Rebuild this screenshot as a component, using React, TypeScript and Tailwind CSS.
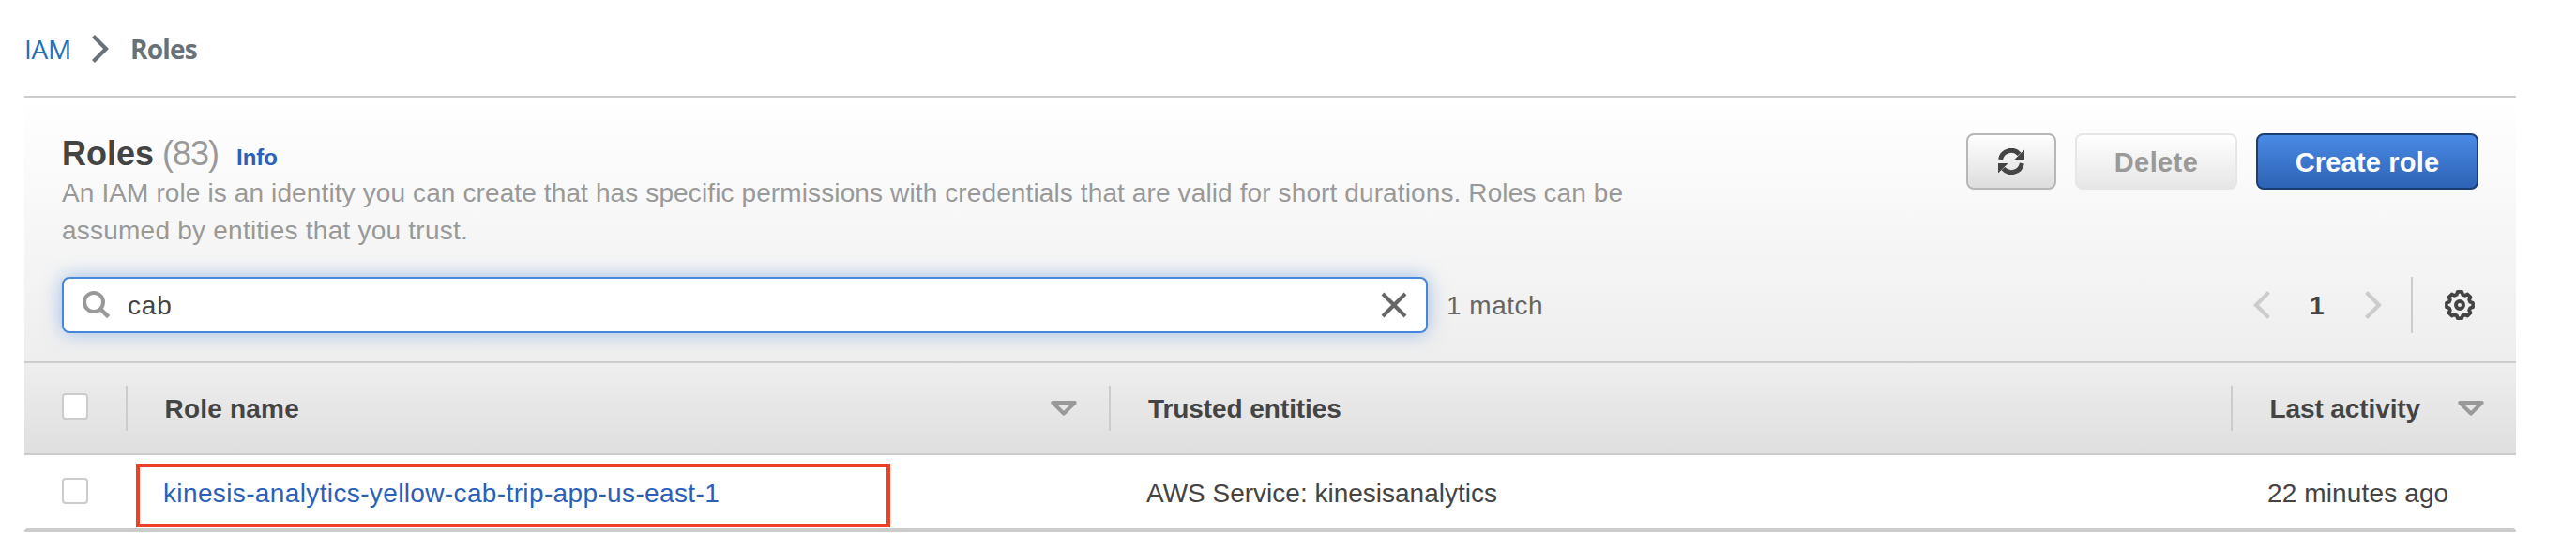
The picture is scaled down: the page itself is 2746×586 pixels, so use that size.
import React from 'react';

function gearOutline(): string {
  const points: string[] = [];
  for (let k = 0; k < 8; k++) {
    const base = k * 45;
    const steps: [number, number][] = [
      [-9, 14.2],
      [9, 14.2],
      [16, 11.6],
      [29, 11.6],
    ];
    for (const [offset, radius] of steps) {
      const angle = ((base + offset) * Math.PI) / 180;
      points.push(`${(16 + radius * Math.cos(angle)).toFixed(2)} ${(16 + radius * Math.sin(angle)).toFixed(2)}`);
    }
  }
  return `M${points.join('L')}Z`;
}

const GEAR = gearOutline();

function GearIcon() {
  return (
    <svg width="32" height="32" viewBox="0 0 32 32" fill="none" stroke="#444444">
      <path d={GEAR} strokeWidth="3.8" strokeLinejoin="round" />
      <circle cx="16" cy="16" r="4" strokeWidth="4" />
    </svg>
  );
}

function RefreshIcon() {
  return (
    <svg width="28" height="28" viewBox="0 0 28 28">
      <g fill="none" stroke="#444444" strokeWidth="5">
        <path d="M2.6 12A11.5 11.5 0 0 1 22.6 6.3" />
        <path d="M25.4 16A11.5 11.5 0 0 1 5.4 21.7" />
      </g>
      <path d="M28 1.4V12H17.4ZM0 26.6V16H10.6Z" fill="#444444" />
    </svg>
  );
}

function SearchIcon() {
  return (
    <svg width="30" height="30" viewBox="0 0 30 30" fill="none" stroke="#999999">
      <circle cx="12" cy="12" r="10" strokeWidth="4" />
      <path d="M19 19L27.6 27.6" strokeWidth="4.4" />
    </svg>
  );
}

function CloseIcon() {
  return (
    <svg width="28" height="28" viewBox="0 0 28 28" fill="none" stroke="#666666" strokeWidth="4">
      <path d="M2 2L26 26M26 2L2 26" />
    </svg>
  );
}

function Chevron({ color, flip = false }: { color: string; flip?: boolean }) {
  return (
    <svg width="18" height="30" viewBox="0 0 18 30" fill="none" stroke={color} strokeWidth="4.2">
      <path d={flip ? 'M16.5 1.5L3 15L16.5 28.5' : 'M1.5 1.5L15 15L1.5 28.5'} />
    </svg>
  );
}

function SortIcon() {
  return (
    <svg width="28" height="16" viewBox="0 0 28 16" fill="none" stroke="#999999" strokeWidth="4" strokeLinejoin="round">
      <path d="M2.3 2H25.7L14 13.6Z" />
    </svg>
  );
}

function Checkbox() {
  return <span className="block h-7 w-7 shrink-0 rounded border-2 border-[#cccccc] bg-white" />;
}

function ColumnDivider() {
  return <span className="block h-12 w-0.5 shrink-0 bg-[#cccccc]" />;
}

export default function App() {
  return (
    <div className="h-[586px] w-[2746px] overflow-hidden bg-white pl-[26px] pr-16 pt-[31px] font-['Liberation_Sans',Arial,sans-serif] text-[28px] leading-10 text-[#444444]">
      <nav className="mb-[31px] flex h-10 items-center font-['Open_Sans',sans-serif]">
        <a className="w-[72px] pt-0.5 tracking-[-0.3px] text-[#2070b8]">IAM</a>
        <span className="mt-0.5 w-[41px]">
          <Chevron color="#687078" />
        </span>
        <span className="pt-0.5 font-bold tracking-[-0.8px] text-[#687078]">Roles</span>
      </nav>

      <section className="border-t-2 border-[#cccccc]">
        <div className="h-[281px] bg-linear-to-b from-white to-[#eeeeee] pl-10 pr-10 pt-[38px]">
          <div className="flex items-start justify-between">
            <div className="w-[1720px]">
              <div className="flex h-11 items-baseline leading-[44px]">
                <h1 className="w-[107px] text-[36px] font-bold">Roles</h1>
                <span className="w-[79px] text-[36px] tracking-[-1px] text-[#999999]">(83)</span>
                <a className="text-2xl leading-[44px] font-bold text-[#2b60b8]">Info</a>
              </div>
              <p className="whitespace-nowrap text-[#999999]">
                <span className="block tracking-[0.117px]">
                  An IAM role is an identity you can create that has specific permissions with credentials that are valid for short durations. Roles can be
                </span>
                <span className="block tracking-[0.23px]">assumed by entities that you trust.</span>
              </p>
            </div>
            <div className="flex gap-5">
              <button className="flex h-[60px] w-24 items-center justify-center rounded-lg border-2 border-[#b7b7b7] bg-linear-to-b from-white to-[#dddddd]">
                <RefreshIcon />
              </button>
              <button className="h-[60px] w-[173px] rounded-lg border-2 border-[#e6e6e6] bg-linear-to-b from-white to-[#e6e6e6] pt-0.5 text-[29px] font-bold tracking-[0.4px] text-[#999999]">
                Delete
              </button>
              <button className="h-[60px] w-[237px] rounded-lg border-2 border-[#1a3e73] bg-linear-to-b from-[#4a8ae6] to-[#2e63b5] pt-0.5 text-[29px] font-bold tracking-[0.2px] text-white">
                Create role
              </button>
            </div>
          </div>

          <div className="mt-[29px] flex h-[60px] items-center">
            <div className="flex h-[60px] w-[1456px] items-center rounded-lg border-2 border-[#4787db] bg-white pl-5 pr-5 shadow-[0_0_20px_rgba(71,135,219,0.5)]">
              <SearchIcon />
              <span className="ml-[18px] grow pt-0.5 tracking-[0.8px]">cab</span>
              <CloseIcon />
            </div>
            <span className="ml-5 pt-0.5 tracking-[0.5px] text-[#666666]">1 match</span>
            <div className="ml-auto flex items-center">
              <Chevron color="#cccccc" flip />
              <span className="ml-[42px] w-[59px] pt-0.5 font-bold">1</span>
              <Chevron color="#cccccc" />
              <span className="ml-[31px] mr-[34px] block h-[60px] w-0.5 bg-[#cccccc]" />
              <span className="pr-1">
                <GearIcon />
              </span>
            </div>
          </div>
        </div>

        <div className="flex h-[100px] items-center border-y-2 border-[#cccccc] bg-linear-to-b from-[#eeeeee] to-[#dfdfdf] font-bold">
          <div className="flex w-[108px] pb-1 pl-10">
            <Checkbox />
          </div>
          <ColumnDivider />
          <div className="flex w-[1046px] items-center justify-between pl-[39.5px] pr-[34px]">
            <span className="pt-0.5 tracking-[0.2px]">Role name</span>
            <SortIcon />
          </div>
          <ColumnDivider />
          <div className="w-[1194px] pl-10 pt-0.5 tracking-[-0.07px]">Trusted entities</div>
          <ColumnDivider />
          <div className="flex w-[302px] items-center justify-between pl-[39.5px] pr-[34px]">
            <span className="pt-0.5 tracking-[-0.1px]">Last activity</span>
            <SortIcon />
          </div>
        </div>

        <div className="relative flex h-[78px] items-center">
          <div className="flex w-[148px] pb-0.5 pl-10">
            <Checkbox />
          </div>
          <a className="w-[1048px] pt-1 tracking-[0.37px] text-[#2b60b8]">kinesis-analytics-yellow-cab-trip-app-us-east-1</a>
          <span className="w-[1195px] pt-1">AWS Service: kinesisanalytics</span>
          <span className="pt-1 tracking-[0.13px]">22 minutes ago</span>
          <span className="absolute left-[119px] top-[9px] h-[68px] w-[804px] border-4 border-[#ee4026]" />
        </div>
        <div className="h-1 rounded-t bg-[#cccccc]" />
      </section>
    </div>
  );
}
